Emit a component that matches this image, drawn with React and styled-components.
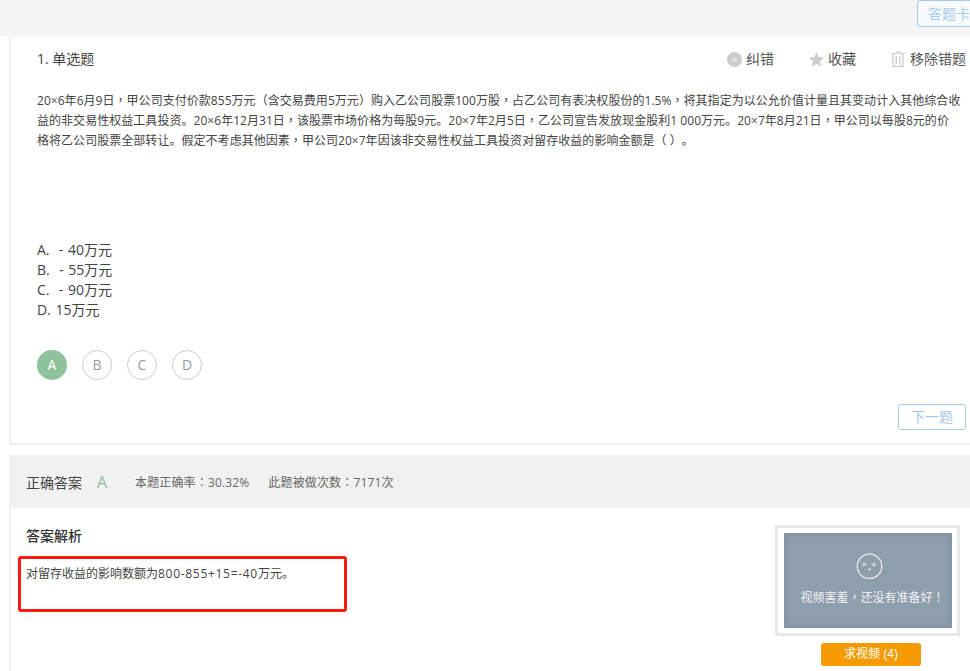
import React from "react";
import styled, { createGlobalStyle } from "styled-components";

const Global = createGlobalStyle`
  html, body { margin: 0; padding: 0; background: #fff; overflow: hidden; }
  body { font-family: "Open Sans", "Noto Sans CJK SC", sans-serif; color: #333; width: 970px; height: 671px; text-spacing-trim: space-all; }
`;
const Page = styled.div`
  width: 970px; height: 671px; overflow: hidden; display: flex; flex-direction: column;
`;
const TopBar = styled.div`
  height: 36px; flex: none; background: #f4f4f4; display: flex; padding-left: 917px; box-sizing: border-box; overflow: hidden;
`;
const CardButton = styled.div`
  flex: none; width: 70px; height: 27px; box-sizing: border-box; border: 1px solid #a3cbf0; border-radius: 3px;
  color: #a9cdf0; background: #f9fafb; font-size: 14px; line-height: 25px; padding-left: 10px; white-space: nowrap;
`;
const QuestionCard = styled.section`
  flex: none; height: 409px; box-sizing: border-box; margin-left: 9px; width: 961px; background: #fff;
  border-left: 2px solid #f0f0f0; border-bottom: 2px solid #f0f0f0; border-top: 1px solid #f4f4f4;
  padding: 12px 0 0 26px; display: flex; flex-direction: column;
`;
const QuestionHead = styled.div`
  display: flex; align-items: center; height: 20px; width: 929px;
`;
const QuestionTitle = styled.div`
  font-size: 14px; line-height: 20px; color: #444; flex: 1;
`;
const Action = styled.div`
  display: flex; align-items: center; gap: ${p => p.$gap || 4}px; margin-left: ${p => p.$ml || 0}px; font-size: 14px; line-height: 20px; color: #555;
`;
const Stem = styled.p`
  margin: 22px 0 0; font-size: 12px; line-height: 20px; color: #444; white-space: nowrap; letter-spacing: .04px;
`;
const Options = styled.div`
  margin-top: 89px; font-size: 14px; line-height: 20px; color: #444;
`;
const Option = styled.div`
  white-space: pre; word-spacing: 1px;
`;
const Choices = styled.div`
  display: flex; gap: 15px; margin-top: 30px;
`;
const Choice = styled.div`
  width: 30px; height: 30px; box-sizing: border-box; border-radius: 50%; text-align: center;
  font-size: 14px; line-height: ${p => p.$active ? 30 : 28}px;
  border: ${p => p.$active ? "none" : "1px solid #ccc"};
  background: ${p => p.$active ? "#8ec29a" : "#fff"};
  color: ${p => p.$active ? "#fff" : "#999"};
`;
const NextRow = styled.div`
  display: flex; justify-content: flex-end; width: 929px; margin-top: 24px;
`;
const NextButton = styled.div`
  width: 68px; height: 26px; box-sizing: border-box; border: 1px solid #a3cbf0; border-radius: 3px; color: #a9c8ea;
  font-size: 14px; line-height: 24px; text-align: center;
`;
const AnswerBar = styled.div`
  flex: none; margin: 10px 0 0 9px; height: 53px; background: #f1f1f1; display: flex; align-items: center; padding-left: 17px;
`;
const AnswerLabel = styled.span`
  font-size: 14px; color: #444; width: 71px;
`;
const AnswerLetter = styled.span`
  font-size: 16px; color: #8ec29a; width: 38px;
`;
const Stat = styled.span`
  font-size: 12px; color: #666; letter-spacing: .15px; margin-right: ${p => p.$mr || 0}px;
`;
const Analysis = styled.div`
  flex: 1; display: flex; margin-left: 9px; border-left: 2px solid #f0f0f0; align-items: flex-start;
`;
const AnalysisBody = styled.div`
  flex: 1; padding: 18px 0 0 7px;
`;
const AnalysisTitle = styled.h3`
  margin: 0 0 0 8px; font-size: 14px; font-weight: 500; line-height: 20px; color: #333;
`;
const Highlight = styled.div`
  margin-top: 10px; width: 329px; height: 56px; box-sizing: border-box; border: 3px solid #fa1a10; border-radius: 3px;
  padding: 5px 0 0 5px; font-size: 12px; line-height: 20px; color: #444; white-space: nowrap;
`;
const Formula = styled.span`
  letter-spacing: .7px;
`;
const Mark = styled.span`
  font-family: "Noto Sans CJK TC", sans-serif; line-height: 0;
`;
const VideoColumn = styled.div`
  flex: none; width: 185px; margin: 17px 10px 0 0; display: flex; flex-direction: column; align-items: flex-start;
`;
const VideoFrame = styled.div`
  width: 185px; height: 111px; box-sizing: border-box; border: 3px solid #e8e8e8; padding: 5px 5px 5px 6px; background: #fff;
`;
const VideoInner = styled.div`
  height: 95px; background: #8f9eac; box-shadow: inset 0 0 7px rgba(100, 116, 132, .45); display: flex; flex-direction: column; align-items: center;
`;
const VideoFace = styled.svg`
  margin: 19px 0 0 3px; flex: none;
`;
const VideoText = styled.div`
  margin: 9px 0 0 9px; color: #f1f3f5; font-size: 12px; line-height: 20px; white-space: nowrap;
`;
const AskButton = styled.div`
  width: 100px; height: 23px; margin: 7px 0 0 46px; border-radius: 3px; background: #f59a00; color: #fff; font-size: 12px; line-height: 23px; text-align: center;
  font-family: "Liberation Sans", "Noto Sans CJK SC", sans-serif;
`;

const Cn = ({ children }) =>
  children.split(/([，：！（）])/).map((part, i) =>
    i % 2 ? <Mark key={i}>{part}</Mark> : part
  );

const ErrIcon = () => (
  <svg width="15" height="15" viewBox="0 0 15 15"><circle cx="7.5" cy="7.5" r="7.5" fill="#ccc"/><path d="M5.3 5.3l4.4 4.4M9.7 5.3l-4.4 4.4" stroke="#eee" strokeWidth="1.1"/></svg>
);
const StarIcon = () => (
  <svg width="15" height="15" viewBox="0 0 15 15"><path d="M7.5.3l2.2 4.7 5.2.6-3.8 3.5 1 5.3-4.6-2.6-4.6 2.6 1-5.3L.1 5.6l5.2-.6z" fill="#ccc"/></svg>
);
const TrashIcon = () => (
  <svg width="14" height="16" viewBox="0 0 14 16" fill="none" stroke="#ccc"><path d="M.3 2.5h13.4" strokeWidth="1"/><path d="M5 2V.7h4V2" strokeWidth="1"/><path d="M2 3v12.3h10V3" strokeWidth="1.3"/><path d="M5.2 5v8M8.8 5v8" strokeWidth="1.3"/></svg>
);

export default function App() {
  return (
    <Page>
      <Global />
      <TopBar><CardButton>答题卡</CardButton></TopBar>
      <QuestionCard>
        <QuestionHead>
          <QuestionTitle>1. 单选题</QuestionTitle>
          <Action><ErrIcon />纠错</Action>
          <Action $ml={35}><StarIcon />收藏</Action>
          <Action $ml={35} $gap={5}><TrashIcon />移除错题</Action>
        </QuestionHead>
        <Stem>
          <Cn>20×6年6月9日，甲公司支付价款855万元（含交易费用5万元）购入乙公司股票100万股，占乙公司有表决权股份的1.5%，将其指定为以公允价值计量且其变动计入其他综合收</Cn><br />
          <Cn>益的非交易性权益工具投资。20×6年12月31日，该股票市场价格为每股9元。20×7年2月5日，乙公司宣告发放现金股利1 000万元。20×7年8月21日，甲公司以每股8元的价</Cn><br />
          <Cn>格将乙公司股票全部转让。假定不考虑其他因素，甲公司20×7年因该非交易性权益工具投资对留存收益的影响金额是（ ）。</Cn>
        </Stem>
        <Options>
          <Option>A.  - 40万元</Option>
          <Option>B.  - 55万元</Option>
          <Option>C.  - 90万元</Option>
          <Option>D. 15万元</Option>
        </Options>
        <Choices>
          <Choice $active>A</Choice>
          <Choice>B</Choice>
          <Choice>C</Choice>
          <Choice>D</Choice>
        </Choices>
        <NextRow><NextButton>下一题</NextButton></NextRow>
      </QuestionCard>
      <AnswerBar>
        <AnswerLabel>正确答案</AnswerLabel>
        <AnswerLetter>A</AnswerLetter>
        <Stat $mr={19}><Cn>本题正确率：30.32%</Cn></Stat>
        <Stat><Cn>此题被做次数：7171次</Cn></Stat>
      </AnswerBar>
      <Analysis>
        <AnalysisBody>
          <AnalysisTitle>答案解析</AnalysisTitle>
          <Highlight>对留存收益的影响数额为<Formula>800-855+15=-40</Formula>万元。</Highlight>
        </AnalysisBody>
        <VideoColumn>
          <VideoFrame>
            <VideoInner>
              <VideoFace width="27" height="27" viewBox="0 0 28 28" fill="none" stroke="#e8edf0">
                <path d="M21 4.2A12.7 12.7 0 1 0 26.7 14c0-2-.5-4-1.4-5.6L21 4.2z" strokeWidth="1.3" />
                <path d="M7 11.5l3 1.5-3 1.5M20 11.5l-3 1.5 3 1.5M12.5 18h3" strokeWidth="1.1" />
              </VideoFace>
              <VideoText><Cn>视频害羞，还没有准备好！</Cn></VideoText>
            </VideoInner>
          </VideoFrame>
          <AskButton>求视频 (4)</AskButton>
        </VideoColumn>
      </Analysis>
    </Page>
  );
}
